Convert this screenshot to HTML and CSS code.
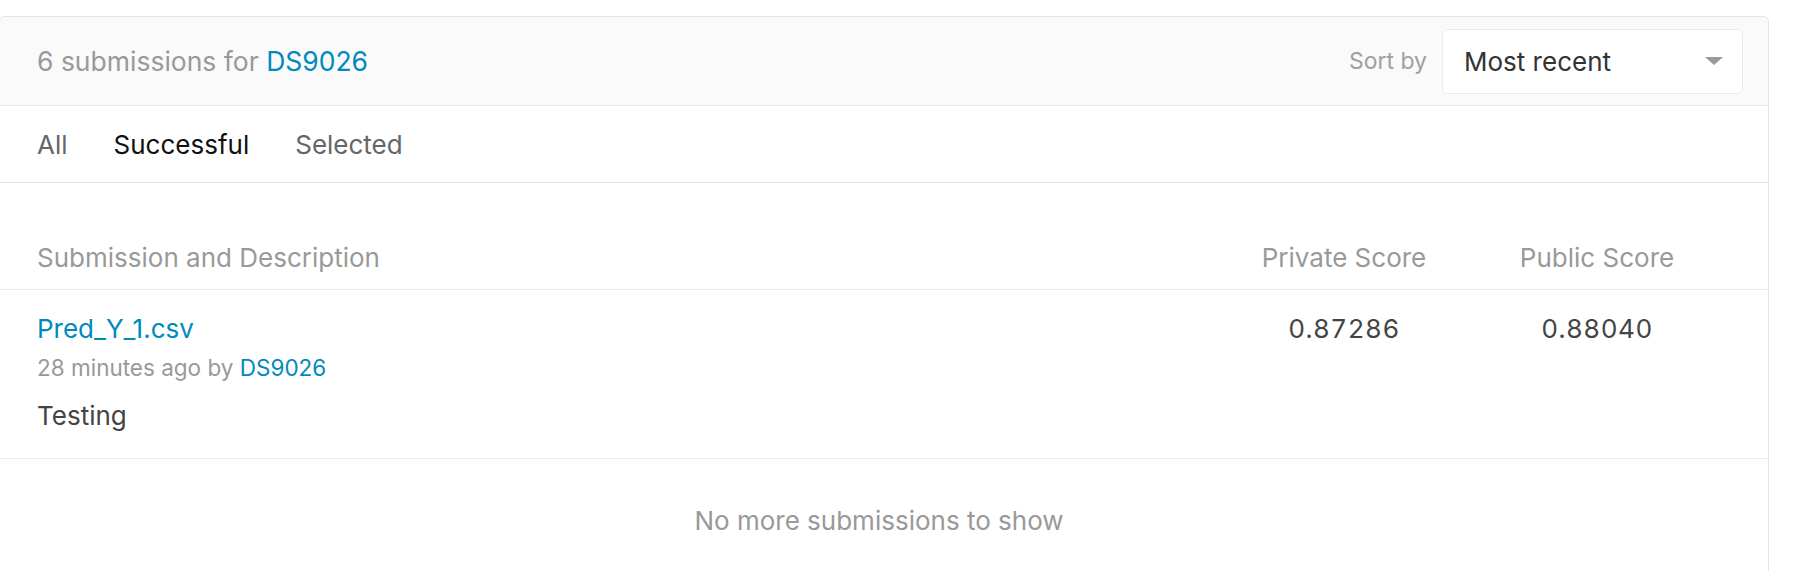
FILE: index.html
```html
<!DOCTYPE html>
<html>
<head>
<meta charset="utf-8">
<link rel="stylesheet" href="styles.css">
</head>
<body>
<div class="card">
  <div class="card-header">
    <div class="title">6 submissions for <a class="link" href="#">DS9026</a></div>
    <div class="sort">
      <span class="sort-label">Sort by</span>
      <div class="select">
        <span class="select-value">Most recent</span>
        <svg class="caret" width="18" height="8" viewBox="0 0 18 8"><path d="M0 0 L18 0 L9 8 Z" fill="#999"/></svg>
      </div>
    </div>
  </div>
  <div class="tabs">
    <span class="tab">All</span>
    <span class="tab active">Successful</span>
    <span class="tab">Selected</span>
  </div>
  <div class="table">
    <div class="row head">
      <div class="col-desc">Submission and Description</div>
      <div class="col-score">Private Score</div>
      <div class="col-score">Public Score</div>
    </div>
    <div class="row body">
      <div class="col-desc">
        <a class="file link" href="#">Pred_Y_1.csv</a>
        <div class="meta">28 minutes ago by <a class="link" href="#">DS9026</a></div>
        <div class="desc">Testing</div>
      </div>
      <div class="col-score score">0.87286</div>
      <div class="col-score score">0.88040</div>
    </div>
    <div class="no-more">No more submissions to show</div>
  </div>
</div>
</body>
</html>
```
FILE: styles.css
```css
html, body {
  margin: 0;
  padding: 0;
  background: #fff;
  font-family: Inter, "Noto Sans", sans-serif;
}
body {
  padding-top: 16px;
}
a { text-decoration: none; }
.link { color: #008abc; }
.card {
  margin-left: -1px;
  width: 1770px;
  border: 1px solid #e3e3e3;
  border-bottom: none;
  border-radius: 6px 6px 0 0;
  overflow: hidden;
  box-sizing: border-box;
}
.card-header {
  height: 88px;
  background: #fafafa;
  border-bottom: 1px solid #e6e6e6;
  display: flex;
  align-items: center;
  justify-content: space-between;
  padding: 0 25px 0 37px;
}
.title {
  font-size: 26.5px;
  color: #999;
}
.sort {
  display: flex;
  align-items: center;
  gap: 15px;
}
.sort-label {
  font-size: 23px;
  color: #a0a0a0;
}
.select {
  width: 301px;
  height: 65px;
  box-sizing: border-box;
  background: #fff;
  border: 1px solid #ebebeb;
  border-radius: 6px;
  display: flex;
  align-items: center;
  justify-content: space-between;
  padding: 0 19px 0 21px;
}
.select-value {
  font-size: 26px;
  color: #333;
}
.tabs {
  height: 76px;
  border-bottom: 1px solid #e6e6e6;
  display: flex;
  align-items: center;
  gap: 46px;
  padding-left: 37px;
}
.tab {
  font-size: 26px;
  color: #666;
}
.tab.active { color: #111; }
.table {
  padding-top: 42px;
}
.row {
  display: grid;
  grid-template-columns: 1fr 220px 220px;
  column-gap: 33px;
  padding: 0 61px 0 37px;
}
.row.head {
  height: 64px;
  align-items: center;
  border-bottom: 1px solid #ebebeb;
  font-size: 26px;
  color: #999;
}
.col-score { text-align: center; }
.row.body {
  padding-top: 22px;
  padding-bottom: 25px;
  border-bottom: 1px solid #ebebeb;
}
.file {
  display: block;
  font-size: 26px;
  line-height: 34px;
}
.meta {
  font-size: 22.5px;
  color: #999;
  line-height: 30px;
  margin-top: 7px;
}
.desc {
  font-size: 26px;
  color: #444;
  margin-top: 16px;
  line-height: 34px;
}
.score {
  font-size: 26px;
  color: #444;
  line-height: 34px;
  font-feature-settings: "tnum";
  letter-spacing: 0.5px;
}
.no-more {
  text-align: center;
  font-size: 26px;
  line-height: 34px;
  color: #999;
  padding: 45px 10px 33px 0;
}
```
